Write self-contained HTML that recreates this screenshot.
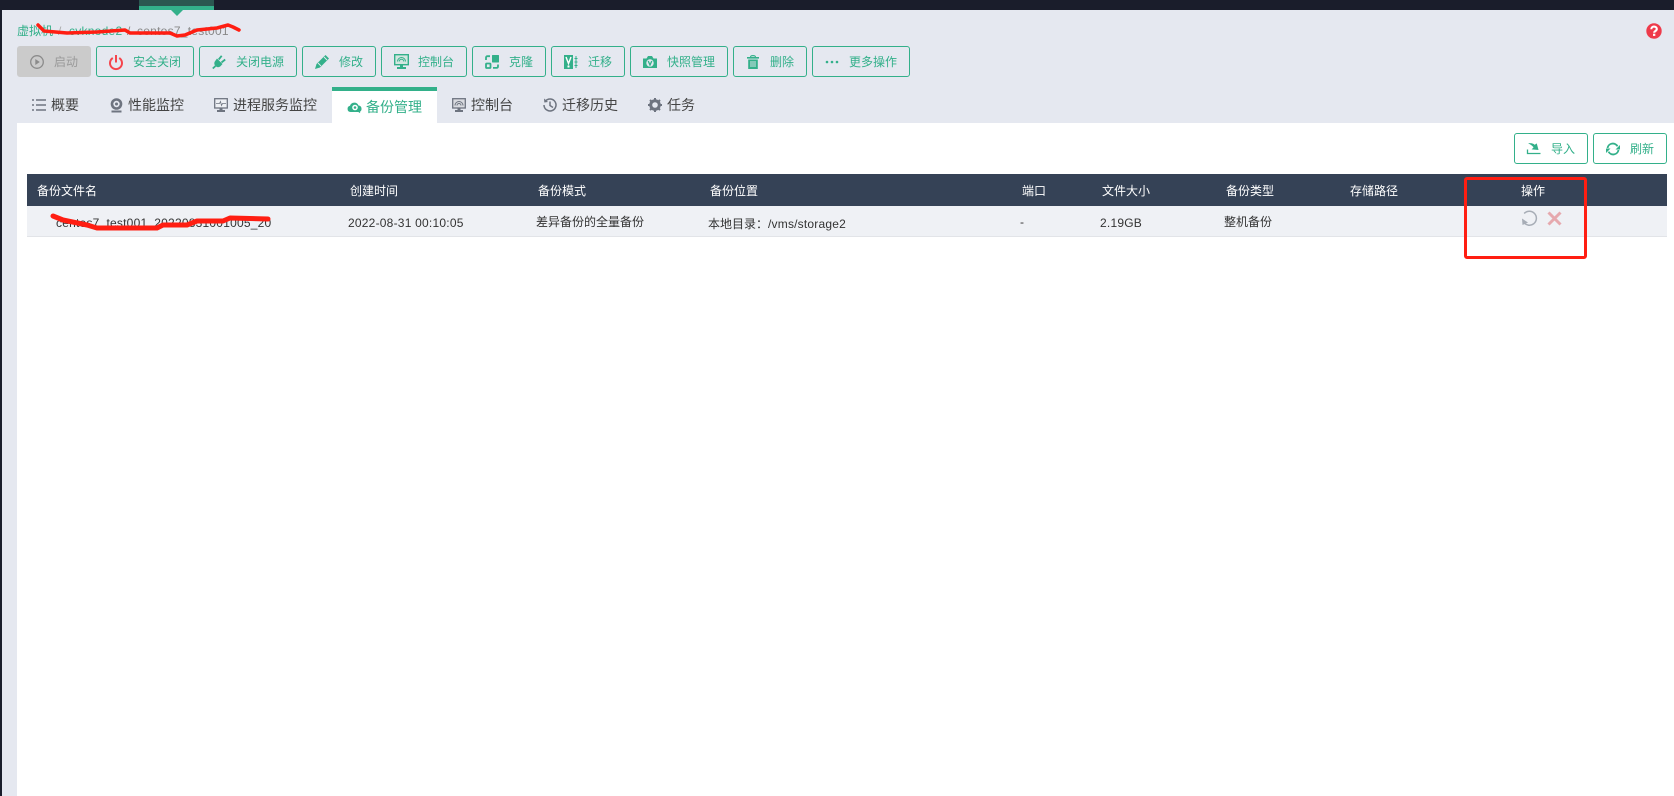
<!DOCTYPE html>
<html lang="zh-CN">
<head>
<meta charset="utf-8">
<title>备份管理</title>
<style>
*{box-sizing:border-box}
html,body{margin:0;padding:0;width:1674px;height:796px;overflow:hidden;background:#1a1d2b}
body{position:relative;font-family:"Liberation Sans","Noto Sans CJK SC",sans-serif;font-size:12px;color:#333}
.a{position:absolute;white-space:nowrap}
#main{position:absolute;left:2px;top:10px;width:1672px;height:786px;background:#e5e8f0}
#white{position:absolute;left:17px;top:123px;width:1657px;height:673px;background:#fff}
.btn{position:absolute;top:46px;height:31px;border:1px solid #33b08a;border-radius:3px}
.rb{position:absolute;top:133px;height:31px;border:1px solid #33b08a;border-radius:3px;background:#fff}
.bt{position:absolute;top:52px;line-height:20px;color:#33b08a;font-size:12px;white-space:nowrap}
.tab{position:absolute;top:95px;line-height:20px;font-size:14px;color:#444;white-space:nowrap}
.th{position:absolute;top:181px;line-height:20px;color:#fff;font-size:12px;white-space:nowrap}
.td{position:absolute;top:212px;line-height:20px;color:#333;font-size:12px;white-space:nowrap}
.l{top:213px;letter-spacing:.22px}
svg{position:absolute;overflow:visible}
</style>
</head>
<body>
<div class="a" style="left:139px;top:0;width:75px;height:6px;background:#2b5750"></div>
<div class="a" style="left:139px;top:6px;width:75px;height:4px;background:#33b08a"></div>
<div id="main"></div>
<div class="a" style="left:171px;top:10px;width:0;height:0;border-left:6px solid transparent;border-right:6px solid transparent;border-top:6px solid #33b08a"></div>
<div id="white"></div>

<!-- breadcrumb -->
<div class="a" style="left:17px;top:21px;line-height:20px;color:#33b08a">虚拟机</div>
<div class="a" style="left:58px;top:21px;line-height:20px;color:#aaa">/</div>
<div class="a" style="left:69px;top:21px;line-height:20px;color:#33b08a;letter-spacing:.25px">cvknode2</div>
<div class="a" style="left:127px;top:21px;line-height:20px;color:#888">/</div>
<div class="a" style="left:137px;top:21px;line-height:20px;color:#888;letter-spacing:.25px">centos7_test001</div>
<svg style="left:0;top:0" width="300" height="50"><path d="M38 25 L44 31 L67 33 L97 32 L125 30 L130 33 L150 33 L170 33 L177 36 L185 35 L197 30 L217 28 L228 25 L233 27 L239 30" fill="none" stroke="#ff1e12" stroke-width="3.500" stroke-linecap="round" stroke-linejoin="round"/></svg>

<!-- help -->
<svg style="left:1646px;top:23px" width="16" height="16" viewBox="0 0 16 16"><circle cx="8" cy="8" r="7.700" fill="#ee3a4a"/><path d="M5.300 6.200C5.300 4.500 6.600 3.600 8 3.600s2.800.9 2.800 2.400c0 2-2.600 2-2.600 3.700" fill="none" stroke="#fff" stroke-width="2.100"/><rect x="7" y="10.700" width="2.300" height="2.200" fill="#fff"/></svg>

<!-- buttons -->
<div class="btn" style="left:17px;width:74px;background:#cbcbcb;border-color:#cbcbcb"></div>
<svg style="left:30px;top:55px" width="14" height="14" viewBox="0 0 14 14"><circle cx="7" cy="7" r="6.300" fill="none" stroke="#8b8b8b" stroke-width="1.300"/><path d="M5.300 4v6l4.500-3z" fill="#8b8b8b"/></svg>
<div class="bt" style="left:54px;color:#9a9a9a">启动</div>

<div class="btn" style="left:96px;width:98px"></div>
<svg style="left:109px;top:55px" width="14" height="15" viewBox="0 0 14 15"><path d="M3.800 3A6 6 0 1 0 10.200 3" fill="none" stroke="#f5444c" stroke-width="2"/><path d="M7 0v7.500" stroke="#f5444c" stroke-width="2"/></svg>
<div class="bt" style="left:133px">安全关闭</div>

<div class="btn" style="left:199px;width:98px"></div>
<svg style="left:212px;top:55px" width="14" height="14" viewBox="0 0 14 14"><path d="M5 3.500l5.500 5.500-2 2.200C7 12.500 5 12.500 3.700 11.300S1.700 8 3 6.200z" fill="#33b08a"/><path d="M6.700 4.500L9.700 .8M9.500 7.500L13.200 4.500M3.500 11L.8 13.500" stroke="#33b08a" stroke-width="1.800" fill="none"/></svg>
<div class="bt" style="left:236px">关闭电源</div>

<div class="btn" style="left:302px;width:74px"></div>
<svg style="left:315px;top:55px" width="14" height="14" viewBox="0 0 14 14"><path d="M10.500 0L14 3.500 5 12.500 0 14 1.500 9z" fill="#33b08a"/><path d="M3 8L6 11M9 2L12 5" stroke="#e5e8f0" stroke-width=".9"/></svg>
<div class="bt" style="left:339px">修改</div>

<div class="btn" style="left:381px;width:86px"></div>
<svg style="left:394px;top:54px" width="15" height="15" viewBox="0 0 15 15"><rect x=".7" y=".7" width="13.600" height="10" fill="#d3e6e0" stroke="#33b08a" stroke-width="1.400"/><path d="M3.500 7.500a4 4 0 0 1 8 0M5.200 7.500a2.300 2.300 0 0 1 4.600 0" fill="none" stroke="#33b08a"/><rect x="6" y="11" width="3" height="2" fill="#33b08a"/><rect x="3" y="13" width="9" height="2" fill="#33b08a"/></svg>
<div class="bt" style="left:418px">控制台</div>

<div class="btn" style="left:472px;width:74px"></div>
<svg style="left:485px;top:55px" width="14" height="14" viewBox="0 0 14 14"><rect x="7" y="0" width="7" height="7.500" rx=".6" fill="#33b08a"/><path d="M5 1.200H2.500Q1 1.200 1 2.700V5" fill="none" stroke="#33b08a" stroke-width="1.800"/><rect x="1" y="8.500" width="4.500" height="4.500" rx=".8" fill="none" stroke="#33b08a" stroke-width="1.800"/><path d="M8 12.900h3.500q1.500 0 1.500-1.500V9.500" fill="none" stroke="#33b08a" stroke-width="1.800"/></svg>
<div class="bt" style="left:509px">克隆</div>

<div class="btn" style="left:551px;width:74px"></div>
<svg style="left:564px;top:55px" width="14" height="14" viewBox="0 0 14 14"><rect x="0" y="0" width="9" height="14" fill="#33b08a"/><path d="M2 2l2.500 6.500L7 2" fill="none" stroke="#fff" stroke-width="1.400"/><rect x="3.500" y="10.500" width="2" height="2" fill="#fff"/><path d="M12 1v12M10.500 3.500h3M10.500 7h3M10.500 10.500h3" stroke="#33b08a" stroke-width="1"/></svg>
<div class="bt" style="left:588px">迁移</div>

<div class="btn" style="left:630px;width:98px"></div>
<svg style="left:643px;top:56px" width="14" height="12" viewBox="0 0 14 12"><path d="M0 2.500h3.500L5 0h4l1.500 2.500H14V12H0z" fill="#33b08a"/><circle cx="7" cy="7" r="3.700" fill="#e5e8f0"/><path d="M5.200 5L7 9l1.800-4" fill="none" stroke="#33b08a" stroke-width="1.300"/></svg>
<div class="bt" style="left:667px">快照管理</div>

<div class="btn" style="left:733px;width:74px"></div>
<svg style="left:747px;top:55px" width="12" height="14" viewBox="0 0 12 14"><path d="M0 2.800h12" stroke="#33b08a" stroke-width="1.600"/><path d="M3.500 2.500C3.500 .8 4.500.6 6 .6s2.500.2 2.500 1.900" fill="none" stroke="#33b08a" stroke-width="1.200"/><path d="M1.200 4.500h9.600V14H1.200z" fill="#33b08a"/><path d="M4 6v6M6 6v6M8 6v6" stroke="#e5e8f0" stroke-width=".9"/></svg>
<div class="bt" style="left:770px">删除</div>

<div class="btn" style="left:812px;width:98px"></div>
<svg style="left:825px;top:60px" width="14" height="4" viewBox="0 0 14 4"><circle cx="2" cy="2" r="1.300" fill="#33b08a"/><circle cx="7" cy="2" r="1.300" fill="#33b08a"/><circle cx="12" cy="2" r="1.300" fill="#33b08a"/></svg>
<div class="bt" style="left:849px">更多操作</div>

<!-- tabs -->
<svg style="left:32px;top:98px" width="14" height="14" viewBox="0 0 14 14"><path d="M0 2h2M4 2h10M0 7h2M4 7h10M0 12h2M4 12h10" stroke="#6e7480" stroke-width="1.500"/></svg>
<div class="tab" style="left:51px">概要</div>

<svg style="left:110px;top:98px" width="13" height="15" viewBox="0 0 13 15"><circle cx="6.500" cy="6" r="5.800" fill="#6e7480"/><circle cx="6.500" cy="6" r="3.200" fill="#e5e8f0"/><circle cx="6.500" cy="6" r="1.500" fill="#6e7480"/><rect x="1.500" y="12.500" width="10" height="2" fill="#6e7480"/></svg>
<div class="tab" style="left:128px">性能监控</div>

<svg style="left:214px;top:98px" width="14" height="14" viewBox="0 0 14 14"><rect x=".7" y=".7" width="12.600" height="9.300" fill="#eef0f4" stroke="#6e7480" stroke-width="1.300"/><path d="M2 5.500h3.500l1-2 1 4 1-2H12" fill="none" stroke="#6e7480" stroke-width=".8"/><rect x="5.500" y="10" width="3" height="2" fill="#6e7480"/><rect x="3" y="12" width="8" height="2" fill="#6e7480"/></svg>
<div class="tab" style="left:233px">进程服务监控</div>

<div class="a" style="left:332px;top:87px;width:105px;height:36px;background:#fff"></div>
<div class="a" style="left:332px;top:87px;width:105px;height:4px;background:#33b08a"></div>
<svg style="left:347px;top:102px" width="15" height="11" viewBox="0 0 15 11"><path d="M3.500 10A3.200 3.200 0 0 1 3 3.700 4.500 4.500 0 0 1 11.500 3.500 3.300 3.300 0 0 1 12 10z" fill="#33b08a"/><circle cx="8" cy="5.500" r="2.800" fill="#fff"/><circle cx="8" cy="5.500" r="1.300" fill="#33b08a"/><path d="M10 8l3 2.500" stroke="#33b08a" stroke-width="1.200"/></svg>
<div class="tab" style="left:366px;top:97px;color:#33b08a">备份管理</div>

<svg style="left:452px;top:98px" width="14" height="14" viewBox="0 0 14 14"><rect x=".7" y=".7" width="12.600" height="9.300" fill="#d9dbe0" stroke="#6e7480" stroke-width="1.300"/><path d="M3 7.500a4 4 0 0 1 8 0M5 7.500a2 2 0 0 1 4 0" fill="none" stroke="#6e7480"/><rect x="5.500" y="10" width="3" height="2" fill="#6e7480"/><rect x="3" y="12" width="8" height="2" fill="#6e7480"/></svg>
<div class="tab" style="left:471px">控制台</div>

<svg style="left:543px;top:98px" width="14" height="14" viewBox="0 0 14 14"><path d="M2.500 3A6 6 0 1 1 1 7" fill="none" stroke="#6e7480" stroke-width="1.500"/><path d="M1 .5L1.300 4.500 5 4z" fill="#6e7480"/><path d="M7 3.500V7.500L10 9.500" fill="none" stroke="#6e7480" stroke-width="1.500"/></svg>
<div class="tab" style="left:562px">迁移历史</div>

<svg style="left:648px;top:98px" width="14" height="14" viewBox="0 0 14 14"><circle cx="7" cy="7" r="4.300" fill="none" stroke="#6e7480" stroke-width="3"/><path d="M7 0v2.500M7 11.500V14M0 7h2.500M11.500 7H14M2 2l2 2M10 10l2 2M12 2l-2 2M4 10l-2 2" stroke="#6e7480" stroke-width="2"/></svg>
<div class="tab" style="left:667px">任务</div>

<!-- right action buttons -->
<div class="rb" style="left:1514px;width:74px"></div>
<svg style="left:1527px;top:142px" width="14" height="13" viewBox="0 0 14 13"><path d="M.5 7.500V11.500H13.500" fill="none" stroke="#33b08a" stroke-width="1.300"/><path d="M2.500 1.500C5 1.500 7 2 7.500 3.500L9.500 2 11 7.500 5.500 7 7 5.500C6.500 4 5 3 2.500 1.500z" fill="#33b08a" stroke="#33b08a" stroke-width=".8"/></svg>
<div class="bt" style="left:1551px;top:139px">导入</div>
<div class="rb" style="left:1593px;width:74px"></div>
<svg style="left:1606px;top:142px" width="14" height="14" viewBox="0 0 14 14"><path d="M1.500 6A5.400 5.400 0 0 1 11.500 4.300M12.500 8A5.400 5.400 0 0 1 2.500 9.700" fill="none" stroke="#33b08a" stroke-width="1.800"/><path d="M14 3v4.500H9.500zM0 11V6.500h4.500z" fill="#33b08a"/></svg>
<div class="bt" style="left:1630px;top:139px">刷新</div>

<!-- table -->
<div class="a" style="left:27px;top:174px;width:1640px;height:32px;background:#354256"></div>
<div class="a" style="left:27px;top:206px;width:1640px;height:31px;background:#eff1f5;border-bottom:1px solid #e2e4e8"></div>
<div class="th" style="left:37px">备份文件名</div>
<div class="th" style="left:350px">创建时间</div>
<div class="th" style="left:538px">备份模式</div>
<div class="th" style="left:710px">备份位置</div>
<div class="th" style="left:1022px">端口</div>
<div class="th" style="left:1102px">文件大小</div>
<div class="th" style="left:1226px">备份类型</div>
<div class="th" style="left:1350px">存储路径</div>
<div class="th" style="left:1521px">操作</div>

<div class="td l" style="left:56px">centos7_test001_20220831001005_20</div>
<div class="td l" style="left:348px">2022-08-31 00:10:05</div>
<div class="td" style="left:536px">差异备份的全量备份</div>
<div class="td" style="left:708px;top:214px">本地目录：<span style="letter-spacing:.2px">/vms/storage2</span></div>
<div class="td" style="left:1020px">-</div>
<div class="td l" style="left:1100px">2.19GB</div>
<div class="td" style="left:1224px">整机备份</div>

<svg style="left:1521px;top:210px" width="17" height="17" viewBox="0 0 17 17"><path d="M3.200 3.500A7 7 0 1 1 2.500 12" fill="none" stroke="#a7adb6" stroke-width="1.500"/><path d="M1 8.500L1.500 15 7 12.500z" fill="#a7adb6"/></svg>
<svg style="left:1547px;top:211px" width="15" height="15" viewBox="0 0 15 15"><path d="M1.500 1.500L13.500 13.500M13.500 1.500L1.500 13.500" stroke="#e6a9ae" stroke-width="3"/></svg>

<svg style="left:0;top:0" width="400" height="260"><path d="M53 216 L63 220 L87 225 L97 228 L157 228 L163 225 L187 225 L197 221 L223 221 L230 218 L268 219" fill="none" stroke="#ff1e12" stroke-width="5" stroke-linecap="round" stroke-linejoin="round"/></svg>

<!-- red annotation box -->
<div class="a" style="left:1464px;top:177px;width:123px;height:82px;border:3px solid #ff1e12;border-radius:3px"></div>
</body>
</html>
